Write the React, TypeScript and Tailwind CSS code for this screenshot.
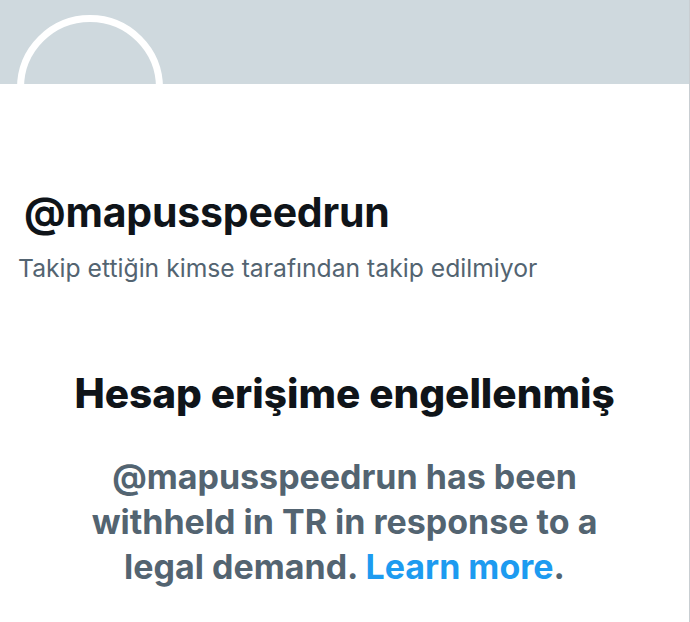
import React from 'react';

const font = { fontFamily: 'Inter, "Noto Sans", sans-serif' };

export default function App() {
  return (
    <div className="w-[690px] h-[622px] bg-white overflow-hidden border-r border-[#c9ced2]" style={font}>
      <div className="relative h-[84px] bg-[#cfd9de]">
        <div className="absolute left-[17px] top-[15px] w-[146px] h-[146px] rounded-full border-[7px] border-white" />
      </div>

      <div className="pt-[104px] pl-[24px]">
        <h2 className="text-[41px] leading-[48px] font-bold text-[#0f1419] tracking-[-0.2px]">@mapusspeedrun</h2>
        <p className="mt-[17px] -ml-[6px] text-[24.7px] leading-[30px] text-[#536471]">
          Takip ettiğin kimse tarafından takip edilmiyor
        </p>
      </div>

      <div className="mt-[87px] flex flex-col items-center text-center">
        <h1 className="text-[40.5px] leading-[48px] font-extrabold text-[#0f1419]">Hesap erişime engellenmiş</h1>
        <p className="mt-[36px] w-[540px] text-[34px] leading-[45px] font-bold text-[#536471]">
          @mapusspeedrun has been withheld in TR in response to a legal demand.{' '}
          <span className="text-[#1d9bf0]">Learn more</span>.
        </p>
      </div>
    </div>
  );
}
